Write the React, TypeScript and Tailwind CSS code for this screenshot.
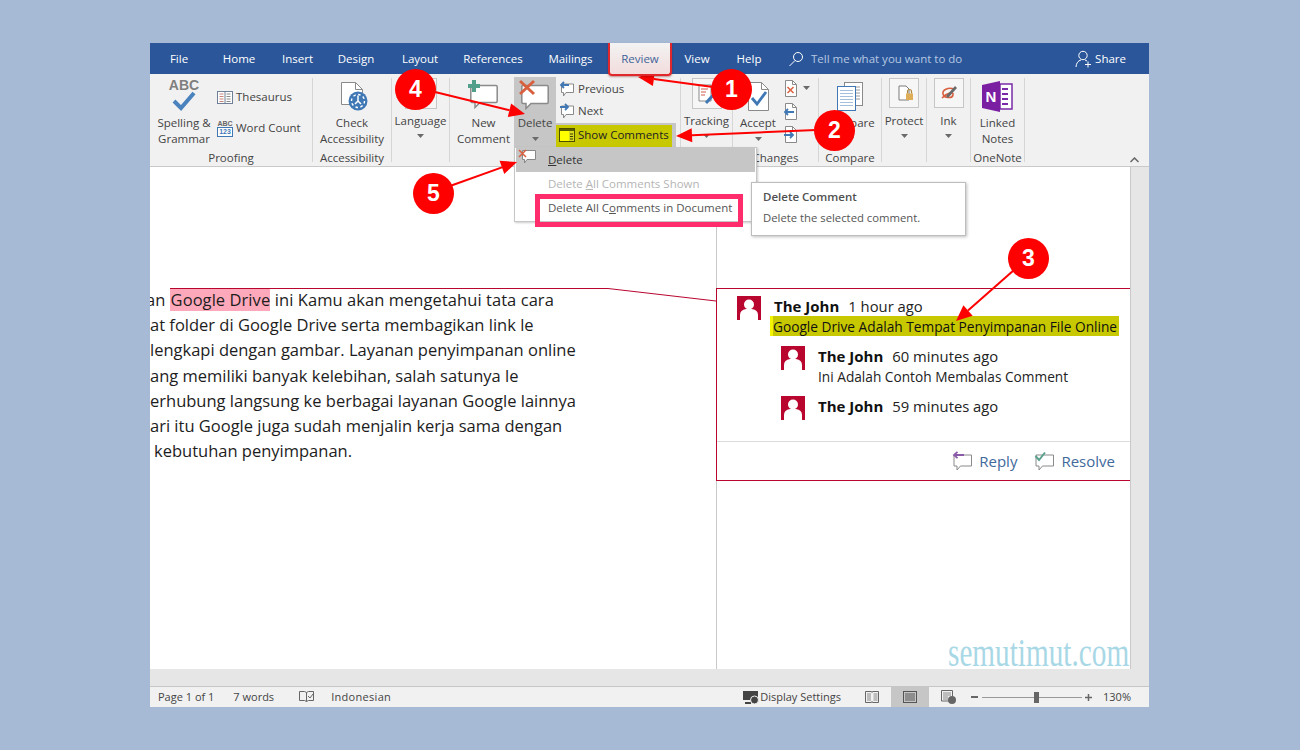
import React from "react";

const Caret = ({ className = "" }: { className?: string }) => (
  <svg width="7" height="4" viewBox="0 0 7 4" className={className}><path d="M0 0h7L3.500 4z" fill="#6a6a6a" /></svg>
);

const Bubble = ({ w = 28, h = 24, stroke = "#8a8a8a", sw = 1.5 }: { w?: number; h?: number; stroke?: string; sw?: number }) => (
  <path d={`M${2} 1.5H${w - 2}Q${w - 0.8} 1.5 ${w - 0.8} 3V${h - 7}Q${w - 0.8} ${h - 5.5} ${w - 2} ${h - 5.5}H${10}L${5} ${h - 0.5}V${h - 5.5}H${2}Q0.8 ${h - 5.5} 0.8 ${h - 7}V3Q0.8 1.5 2 1.5Z`} fill="#fff" stroke={stroke} strokeWidth={sw} />
);

const Spell = () => (
  <div className="flex flex-col items-center h-[37px]">
    <span className="text-[14px] leading-[13px] font-bold text-[#7f7f7f] mt-[1px] [font-family:'Liberation_Sans',sans-serif]">ABC</span>
    <svg width="24" height="20" viewBox="0 0 24 20" className="-mt-[1px]"><path d="M2 10l7 7L22 2" fill="none" stroke="#4a82bd" strokeWidth="4" /></svg>
  </div>
);

const Thesaurus = () => (
  <svg width="16" height="13" viewBox="0 0 16 13"><rect x=".5" y=".5" width="15" height="12" fill="#fff" stroke="#6f7f95" /><path d="M8 .5v12" stroke="#6f7f95" /><path d="M2.500 3h4M2.500 5.500h4M2.500 8h4M2.500 10.500h4" stroke="#c9837a" /><path d="M9.500 3h4M9.500 5.500h4M9.500 8h4M9.500 10.500h4" stroke="#8a8a8a" /></svg>
);

const WordCountIcon = () => (
  <div className="w-[16px] flex flex-col items-center [font-family:'Liberation_Sans',sans-serif]">
    <span className="text-[7px] leading-[7px] font-bold text-[#666]">ABC</span>
    <span className="text-[7px] leading-[8px] font-bold text-[#3f78b5] border border-[#3f78b5] w-full text-center bg-white">123</span>
  </div>
);

const CheckAcc = () => (
  <svg width="32" height="33" viewBox="0 0 32 33">
    <path d="M5.500 4.500h14l7 7v15h-21z" fill="#fff" stroke="#8a8a8a" />
    <path d="M19.500 4.500v7h7" fill="none" stroke="#8a8a8a" />
    <circle cx="22" cy="23" r="9.500" fill="#3f78b5" />
    <circle cx="22" cy="23" r="6.500" fill="none" stroke="#fff" strokeWidth="1.400" strokeDasharray="2.500 2.500" />
    <path d="M22 17.500V23l-3 3M22 23l3 3" fill="none" stroke="#fff" strokeWidth="1.500" />
  </svg>
);

const LangIcon = () => (
  <svg width="32" height="31" viewBox="0 0 32 31"><rect x=".5" y=".5" width="31" height="30" fill="#f6f6f6" stroke="#c6c6c6" /><path d="M8 5h11l5 5v16H8z" fill="#fff" stroke="#8a8a8a" /></svg>
);

const NewComment = () => (
  <svg width="32" height="32" viewBox="0 0 32 32">
    <g transform="translate(2 6)"><Bubble /></g>
    <path d="M6 2v12M0 8h12" stroke="#52a08c" strokeWidth="4" />
  </svg>
);

const DeleteIcon = () => (
  <svg width="32" height="33" viewBox="0 0 32 33">
    <g transform="translate(2 7)"><Bubble w={28} h={25} /></g>
    <path d="M1 4l14 13M15 4L1 17" stroke="#d9603f" strokeWidth="3" />
  </svg>
);

const SmallArrowBubble = ({ down = false }: { down?: boolean }) => (
  <svg width="16" height="16" viewBox="0 0 16 16">
    <g transform="translate(1 2)"><path d="M1.500 1H13.500V9.500H6L3.500 13V9.500H1.500Z" fill="#fff" stroke="#8a8a8a" /></g>
    {down ? <path d="M1 4h8M6 1l3 3-3 3" fill="none" stroke="#3f78b5" strokeWidth="1.800" /> : <path d="M10 4H2M5 1L2 4l3 3" fill="none" stroke="#3f78b5" strokeWidth="1.800" />}
  </svg>
);

const ShowIcon = () => (
  <svg width="16" height="14" viewBox="0 0 16 14"><rect x=".5" y=".5" width="15" height="13" fill="#ffff00" stroke="#4c4c00" /><rect x="1" y="1" width="14" height="2" fill="#5a5a00" /><rect x="10" y="3" width="5" height="10" fill="#d8d820" /><path d="M11 6h3M11 8.500h3M11 11h3" stroke="#3d3d00" /></svg>
);

const TrackIcon = () => (
  <svg width="30" height="31" viewBox="0 0 30 31"><rect x=".5" y=".5" width="29" height="30" fill="#f6f6f6" stroke="#c6c6c6" /><path d="M7 7h12v16H7z" fill="#fff" stroke="#8a8a8a" /><path d="M9 11h7M9 14h5M9 17h4" stroke="#d0574a" /><path d="M14 25l9-10" stroke="#3f78b5" strokeWidth="3" /></svg>
);

const AcceptIcon = () => (
  <svg width="21" height="29" viewBox="0 0 21 29"><path d="M.5 .5h13l7 7v21H.500z" fill="#fff" stroke="#8a8a8a" /><path d="M13.500 .5v7h7" fill="none" stroke="#8a8a8a" /><path d="M4 16l5 6 9-12" fill="none" stroke="#3f78b5" strokeWidth="2.800" /></svg>
);

const SmallDoc = ({ kind }: { kind: "x" | "l" | "r" }) => (
  <svg width="15" height="17" viewBox="0 0 15 17">
    <path d="M2.500 .5h7l4 4v12h-11z" fill="#fff" stroke="#8a8a8a" />
    <path d="M9.500 .5v4h4" fill="none" stroke="#8a8a8a" />
    {kind === "x" && <path d="M4.500 7l6 6M10.500 7l-6 6" stroke="#d9603f" strokeWidth="1.500" />}
    {kind === "l" && <path d="M11 9H2M5 6L2 9l3 3" fill="none" stroke="#3f78b5" strokeWidth="1.800" />}
    {kind === "r" && <path d="M1 9h9M7 6l3 3-3 3" fill="none" stroke="#3f78b5" strokeWidth="1.800" />}
  </svg>
);

const CompareIcon = () => (
  <svg width="26" height="29" viewBox="0 0 26 29">
    <rect x="7.500" y=".5" width="18" height="23" fill="#fff" stroke="#8a8a8a" />
    <path d="M19 5h4M19 8h4M19 11h4M19 14h4M19 17h4" stroke="#9a9a9a" />
    <rect x=".5" y="4.500" width="18" height="24" fill="#fff" stroke="#3f78b5" />
    <path d="M3 8.500h13M3 11.500h13M3 14.500h13M3 17.500h13M3 20.500h13M3 23.500h13" stroke="#a3bfdc" />
  </svg>
);

const ProtectIcon = () => (
  <svg width="30" height="30" viewBox="0 0 30 30"><rect x=".5" y=".5" width="29" height="29" fill="#f6f6f6" stroke="#c6c6c6" /><path d="M10 8h7l3 3v11H10z" fill="#fff" stroke="#7a7a7a" /><rect x="17" y="15.500" width="7" height="6.500" fill="#dfae58" /><path d="M18.500 15.500v-2a2 2 0 014 0v2" fill="none" stroke="#b08a40" strokeWidth="1.200" /></svg>
);

const InkIcon = () => (
  <svg width="30" height="30" viewBox="0 0 30 30"><rect x=".5" y=".5" width="29" height="29" fill="#f6f6f6" stroke="#c6c6c6" /><path d="M20 11c-6-2-12 1-11 5s9 5 10 1-6-2-11 3" fill="none" stroke="#d9603f" strokeWidth="1.600" /><path d="M12 18l9-10 2 2-9 10z" fill="#6a6a6a" /></svg>
);

const OneNote = () => (
  <svg width="31" height="31" viewBox="0 0 31 31">
    <path d="M18 3h12v25H18z" fill="#fff" stroke="#7a2aa8" strokeWidth="1.500" />
    <path d="M20 8h6M20 13h6M20 18h6M20 23h6" stroke="#7a2aa8" strokeWidth="2" />
    <path d="M0 4L18 0v31L0 27z" fill="#7a1fa2" />
    <text x="9" y="21" textAnchor="middle" fill="#fff" fontSize="15" fontWeight="700" fontFamily="Liberation Sans">N</text>
  </svg>
);

const Avatar = () => (
  <svg width="24" height="24" viewBox="0 0 24 24" className="shrink-0">
    <rect width="24" height="24" fill="#b9062f" />
    <circle cx="12" cy="8.500" r="5" fill="#fff" />
    <path d="M3 24v-5q0-5 6-6h6q6 1 6 6v5z" fill="#fff" />
  </svg>
);

const Large = ({ className, icon, lines, caret }: { className: string; icon: React.ReactNode; lines: string[]; caret?: boolean }) => (
  <div className={`flex flex-col items-center shrink-0 ${className}`}>
    <div className="h-[37px] flex items-start justify-center">{icon}</div>
    {lines.map((l) => <div key={l} className="leading-[16px] whitespace-nowrap">{l}</div>)}
    {caret && <Caret className="mt-[6px]" />}
  </div>
);

const Boxed = ({ className, icon, label, caret = true }: { className: string; icon: React.ReactNode; label: string; caret?: boolean }) => (
  <div className={`flex flex-col items-center shrink-0 ${className}`}>
    <div className="h-[35px] flex items-start justify-center">{icon}</div>
    <div className="leading-[16px] whitespace-nowrap">{label}</div>
    {caret && <Caret className="mt-[5px]" />}
  </div>
);

const Group = ({ className, label, children }: { className: string; label?: string; children: React.ReactNode }) => (
  <div className="flex shrink-0">
    <div className={`flex flex-col pt-[4px] ${className}`}>
      <div className="h-[72px] flex">{children}</div>
      <div className="h-[16px] leading-[16px] text-center text-[11.500px] whitespace-nowrap">{label}</div>
    </div>
    <div className="w-px h-[84px] mt-[4px] bg-[#d6d6d6]" />
  </div>
);

const Tab = ({ className, children }: { className: string; children: React.ReactNode }) => (
  <div className={`flex items-center justify-center shrink-0 text-[11.500px] text-white ${className}`}>{children}</div>
);

const Callout = ({ className, n }: { className: string; n: number }) => (
  <div className={`absolute w-[41px] h-[41px] rounded-full bg-[#fe0000] flex items-center justify-center text-white text-[23px] font-bold [font-family:'Liberation_Sans',sans-serif] ${className}`}>{n}</div>
);

const Arrow = ({ x1, y1, x2, y2 }: { x1: number; y1: number; x2: number; y2: number }) => {
  const a = Math.atan2(y2 - y1, x2 - x1);
  const l = 16, w = 7;
  const bx = x2 - l * Math.cos(a), by = y2 - l * Math.sin(a);
  const px = -Math.sin(a) * w, py = Math.cos(a) * w;
  return (
    <g>
      <line x1={x1} y1={y1} x2={bx} y2={by} stroke="#fe0000" strokeWidth="2" />
      <polygon points={`${x2},${y2} ${bx + px},${by + py} ${bx - px},${by - py}`} fill="#fe0000" />
    </g>
  );
};

const Comment = ({ name, time, body, className }: { name: string; time: string; body?: string; className: string }) => (
  <div className={`flex ${className}`}>
    <Avatar />
    <div className="ml-[13px]">
      <div className="text-[15px] leading-[20px] text-[#222] whitespace-nowrap"><span className="font-bold text-[#111]">{name}</span><span className="ml-[9px] text-[14.800px]">{time}</span></div>
      {body && <div className="mt-px text-[13.700px] leading-[20px] text-[#222] whitespace-nowrap">{body}</div>}
    </div>
  </div>
);

const docLines = [
  { pad: "pl-0", t: "at folder di Google Drive serta membagikan link le" },
  { pad: "pl-0", t: "lengkapi dengan gambar. Layanan penyimpanan online" },
  { pad: "pl-0", t: "ang memiliki banyak kelebihan, salah satunya le" },
  { pad: "pl-0", t: "erhubung langsung ke berbagai layanan Google lainnya" },
  { pad: "pl-0", t: "ari itu Google juga sudah menjalin kerja sama dengan" },
  { pad: "pl-[4px]", t: "kebutuhan penyimpanan." },
];

export default function App() {
  return (
    <div className="relative w-full h-[750px] overflow-hidden bg-[#a6b9d5] pt-[43px] pl-[150px] [font-family:'Open_Sans',sans-serif] text-[11.500px] text-[#444]">
      <div className="w-[999px] h-[664px] flex flex-col">
        {/* Title / tab bar */}
        <div className="h-[31px] bg-[#2b579a] flex shrink-0">
          <Tab className="w-[58px]">File</Tab>
          <Tab className="w-[62px]">Home</Tab>
          <Tab className="w-[55px]">Insert</Tab>
          <Tab className="w-[62px]">Design</Tab>
          <Tab className="w-[66px]">Layout</Tab>
          <Tab className="w-[80px]">References</Tab>
          <Tab className="w-[75px]">Mailings</Tab>
          <div className="w-[64px] h-[33px] shrink-0 rounded-b-[4px] border-2 border-t-0 border-[#e0282c] bg-gradient-to-b from-[#f3f3f3] to-[#f2dcdc] flex items-center justify-center text-[11.500px] text-[#3f6499] z-10 shadow-[0_1px_2px_rgba(120,0,0,0.4)]">Review</div>
          <Tab className="w-[50px]">View</Tab>
          <Tab className="w-[54px]">Help</Tab>
          <div className="flex items-center ml-[12px]">
            <svg width="16" height="16" viewBox="0 0 16 16"><circle cx="10" cy="6" r="4.500" fill="none" stroke="#fff" /><path d="M7 9.500L1.500 15" stroke="#fff" /></svg>
            <span className="ml-[7px] text-[11.500px] text-[#b7c8e2] whitespace-nowrap">Tell me what you want to do</span>
          </div>
          <div className="flex items-center ml-auto mr-[23px] text-white">
            <svg width="17" height="18" viewBox="0 0 17 18"><circle cx="8" cy="5.500" r="4.200" fill="none" stroke="#fff" /><path d="M1 17q.5-6 5-7M10 10l2 1M10 14.500h6M13 11.500v6" fill="none" stroke="#fff" /></svg>
            <span className="ml-[3px] text-[11.500px]">Share</span>
          </div>
        </div>

        {/* Ribbon */}
        <div className="relative h-[93px] bg-[#f1f1f1] border-b border-[#c9c9c9] flex shrink-0">
          <Group className="w-[162px]" label="Proofing">
            <Large className="w-[68px]" icon={<Spell />} lines={["Spelling &", "Grammar"]} />
            <div className="ml-[-1px] flex flex-col">
              <div className="flex items-center h-[16px] mt-[11px] gap-[3px]"><Thesaurus /><span>Thesaurus</span></div>
              <div className="flex items-center h-[16px] mt-[15px] gap-[3px]"><WordCountIcon /><span className="whitespace-nowrap">Word Count</span></div>
            </div>
          </Group>
          <Group className="w-[78px]" label="Accessibility">
            <Large className="w-[78px]" icon={<CheckAcc />} lines={["Check", "Accessibility"]} />
          </Group>
          <Group className="w-[57px]" label="">
            <Boxed className="w-[57px]" icon={<LangIcon />} label="Language" />
          </Group>
          <Group className="w-[230px]" label="">
            <Large className="w-[64px] pl-[3px]" icon={<NewComment />} lines={["New", "Comment"]} />
            <div className="w-[42px] h-[70px] -mt-px bg-[#c6c6c6] flex flex-col items-center shrink-0">
              <div className="h-[38px]"><DeleteIcon /></div>
              <div className="leading-[16px]">Delete</div>
              <Caret className="mt-[6px]" />
            </div>
            <div className="flex flex-col w-[120px]">
              <div className="h-[21px] flex items-center pl-[3px] gap-[3px]"><SmallArrowBubble /><span>Previous</span></div>
              <div className="h-[24px] flex items-center pl-[3px] gap-[3px]"><SmallArrowBubble down /><span>Next</span></div>
              <div className="h-[25px] pt-[2px] bg-[#c6c6c6] w-[120px]">
                <div className="h-[23px] pb-[4px] w-[116px] bg-[#c8c800] flex items-center pl-[3px] gap-[3px] text-[#222]"><ShowIcon /><span className="whitespace-nowrap">Show Comments</span></div>
              </div>
            </div>
          </Group>
          <Group className="w-[51px]" label="">
            <Boxed className="w-[51px]" icon={<TrackIcon />} label="Tracking" />
          </Group>
          <Group className="w-[85px]" label="Changes">
            <div className="w-[50px] flex flex-col items-center shrink-0">
              <div className="h-[37px] pt-[4px]"><AcceptIcon /></div>
              <div className="leading-[16px]">Accept</div>
              <Caret className="mt-[6px]" />
            </div>
            <div className="flex flex-col gap-[6px] mt-[2px] shrink-0"><SmallDoc kind="x" /><SmallDoc kind="l" /><SmallDoc kind="r" /></div>
            <Caret className="ml-[5px] mt-[8px]" />
          </Group>
          <Group className="w-[62px]" label="Compare">
            <Large className="w-[62px]" icon={<div className="pt-[4px]"><CompareIcon /></div>} lines={["Compare"]} caret />
          </Group>
          <Group className="w-[44px]" label="">
            <Boxed className="w-[44px]" icon={<ProtectIcon />} label="Protect" />
          </Group>
          <Group className="w-[43px]" label="">
            <Boxed className="w-[43px]" icon={<InkIcon />} label="Ink" />
          </Group>
          <Group className="w-[53px]" label="OneNote">
            <Large className="w-[53px]" icon={<div className="pt-[3px]"><OneNote /></div>} lines={["Linked", "Notes"]} />
          </Group>
          <svg width="9" height="6" viewBox="0 0 9 6" className="absolute right-[10px] bottom-[3px]"><path d="M.5 5l4-4 4 4" fill="none" stroke="#666" strokeWidth="1.500" /></svg>
        </div>

        {/* Document + comment pane */}
        <div className="flex flex-1 min-h-0">
          <div className="w-[566px] bg-white overflow-hidden pt-[120px] text-[16.500px] leading-[25.170px] text-[#1d1d1d] shrink-0">
            <div className="whitespace-nowrap h-[25.170px] -ml-[4px] tracking-[0.06px]">an<span className="inline-block ml-[5px] w-[100px] text-center h-[23px] leading-[23px] bg-[#fda9bb]">Google Drive</span> ini Kamu akan mengetahui tata cara</div>
            {docLines.map((l) => <div key={l.t} className={`whitespace-nowrap ${l.pad}`}>{l.t}</div>)}
          </div>
          <div className="w-[414px] bg-white border-l border-[#c9c9c9] pt-[121px] shrink-0">
            <div className="-ml-px h-[193px] border-y border-l border-[#b9062f] flex flex-col">
              <div className="h-[153px] border-b border-[#dcdcdc] relative pt-[7px]">
                <Comment className="pl-[20px]" name="The John" time="1 hour ago" />
                <div className="absolute left-[53px] top-[27px] h-[20px] w-[349px] bg-[#c8c800] border-l-[3px] border-[#f4f400] text-[13.700px] leading-[21px] text-[#111] whitespace-nowrap">Google Drive Adalah Tempat Penyimpanan File Online</div>
                <Comment className="pl-[64px] mt-[26px]" name="The John" time="60 minutes ago" body="Ini Adalah Contoh Membalas Comment" />
                <Comment className="pl-[64px] mt-[9px]" name="The John" time="59 minutes ago" />
              </div>
              <div className="flex-1 flex items-center justify-end pr-[15px] text-[15px] text-[#41699b]">
                <svg width="21" height="20" viewBox="0 0 21 20"><path d="M2 4H19.500V15H8.500L5 19V15H2Z" fill="none" stroke="#8a8a8a" /><path d="M12 4H2M5.500 .8L2 4l3.500 3.200" fill="none" stroke="#8a5aa8" strokeWidth="1.800" /></svg>
                <span className="ml-[6px]">Reply</span>
                <svg width="21" height="20" viewBox="0 0 21 20" className="ml-[17px]"><path d="M2 4H19.500V15H8.500L5 19V15H2Z" fill="none" stroke="#8a8a8a" /><path d="M1.500 5l3.500 4L11 1.500" fill="none" stroke="#5aa08c" strokeWidth="2" /></svg>
                <span className="ml-[6px]">Resolve</span>
              </div>
            </div>
          </div>
          <div className="w-[19px] bg-[#e6e6e6] border-l border-[#c9c9c9] shrink-0" />
        </div>

        {/* Horizontal strip */}
        <div className="h-[18px] bg-[#e6e6e6] border-b border-[#c6c6c6] shrink-0" />

        {/* Status bar */}
        <div className="h-[20px] bg-[#f1f1f1] flex items-center text-[11px] text-[#444] shrink-0">
          <span className="ml-[8px]">Page 1 of 1</span>
          <span className="ml-[19px]">7 words</span>
          <svg width="15" height="14" viewBox="0 0 15 14" className="ml-[25px]"><path d="M.5 1.500h5l2 1v9l-2-1h-5zM7.500 2.500l2-1h5v9h-5l-2 1" fill="none" stroke="#666" /><path d="M9 6l2 2 3-4" fill="none" stroke="#666" /></svg>
          <span className="ml-[17px] tracking-[0.3px]">Indonesian</span>
          <div className="ml-auto flex items-center h-full">
            <svg width="16" height="15" viewBox="0 0 16 15"><rect x="0" y="1" width="15" height="9" fill="#444" /><path d="M2 13h6" stroke="#444" strokeWidth="2" /><circle cx="11.500" cy="10" r="4" fill="#444" stroke="#f1f1f1" /></svg>
            <span className="ml-[1px] whitespace-nowrap">Display Settings</span>
            <svg width="14" height="12" viewBox="0 0 14 12" className="ml-[24px]"><path d="M.5 .5h6l.5 1 .5-1h6v11h-6l-.5-1-.5 1h-6z" fill="none" stroke="#666" /><path d="M2 3h4M2 5h4M2 7h4M2 9h4M8.500 3h4M8.500 5h4M8.500 7h4M8.500 9h4" stroke="#888" /></svg>
            <div className="ml-[12px] w-[38px] h-full bg-[#c6c6c6] flex items-center justify-center">
              <svg width="14" height="12" viewBox="0 0 14 12"><rect x=".5" y=".5" width="13" height="11" fill="none" stroke="#555" /><path d="M2 3h10M2 5h10M2 7h10M2 9h10" stroke="#555" /></svg>
            </div>
            <svg width="15" height="14" viewBox="0 0 15 14" className="ml-[12px]"><path d="M9 11H.5V.5h11V6" fill="none" stroke="#666" /><path d="M2 3h8M2 5h8M2 7h5M2 9h5" stroke="#888" /><circle cx="11" cy="10" r="4" fill="#666" /></svg>
            <div className="ml-[15px] w-[7px] h-[2px] bg-[#666]" />
            <div className="relative ml-[4px] w-[100px] h-px bg-[#999]"><div className="absolute left-[52px] -top-[5px] w-[5px] h-[11px] bg-[#666]" /></div>
            <svg width="7" height="7" viewBox="0 0 7 7" className="ml-[3px]"><path d="M3.500 0v7M0 3.500h7" stroke="#666" strokeWidth="1.500" /></svg>
            <span className="ml-[11px] mr-[18px]">130%</span>
          </div>
        </div>
      </div>

      {/* Delete menu */}
      <div className="absolute left-[514px] top-[147px] w-[243px] h-[75px] bg-white border border-[#c6c6c6] shadow-[1px_1px_2px_rgba(0,0,0,0.2)] px-px text-[#444]">
        <div className="h-[24px] bg-[#c6c6c6] flex items-center relative pl-[32px] text-[#333]">
          <svg width="18" height="15" viewBox="0 0 18 15" className="absolute left-[2px] top-[1px]"><g transform="translate(4 1)"><path d="M.5 .5H13.500V9.500H5L2.500 13V9.500H.5Z" fill="#fff" stroke="#888" /></g><path d="M1 1l7 7M8 1L1 8" stroke="#d9603f" strokeWidth="1.500" /></svg>
          <span><u>D</u>elete</span>
        </div>
        <div className="h-[24px] flex items-center pl-[32px] text-[#b5b5b5] whitespace-pre">Delete <u>A</u>ll Comments Shown</div>
        <div className="h-[24px] flex items-center pl-[32px] text-[#555] whitespace-pre">Delete All C<u>o</u>mments in Document</div>
      </div>
      <div className="absolute left-[535px] top-[194px] w-[208px] h-[33px] border-[5px] border-[#ff2d6b]" />

      {/* Tooltip */}
      <div className="absolute left-[751px] top-[182px] w-[215px] h-[54px] bg-white border border-[#bdbdbd] shadow-[1px_1px_3px_rgba(0,0,0,0.25)] px-[11px] pt-[6px] text-[#555]">
        <div className="font-semibold leading-[16px] text-[#505050]">Delete Comment</div>
        <div className="mt-[5px] leading-[16px] text-[11.300px]">Delete the selected comment.</div>
      </div>

      {/* Watermark */}
      <div className="absolute left-[948px] top-[634px] origin-left scale-x-[0.75] text-[39px] leading-[38px] text-[#a8d8e6] [font-family:'Liberation_Serif',serif] whitespace-nowrap">semutimut.com</div>

      {/* Annotation lines */}
      <svg width="1300" height="750" viewBox="0 0 1300 750" className="absolute left-0 top-0 pointer-events-none">
        <path d="M170 288.500H608L716 301" fill="none" stroke="#b9062f" />
        <Arrow x1={713} y1={87} x2={638} y2={77} />
        <Arrow x1={816} y1={130} x2={676} y2={136} />
        <Arrow x1={1014} y1={270} x2={956} y2={321} />
        <Arrow x1={435} y1={92} x2={525} y2={114} />
        <Arrow x1={450} y1={186} x2={517} y2={162} />
      </svg>
      <Callout className="left-[711px] top-[69px]" n={1} />
      <Callout className="left-[814px] top-[110px]" n={2} />
      <Callout className="left-[1008px] top-[238px]" n={3} />
      <Callout className="left-[395px] top-[69px]" n={4} />
      <Callout className="left-[413px] top-[173px]" n={5} />
    </div>
  );
}
